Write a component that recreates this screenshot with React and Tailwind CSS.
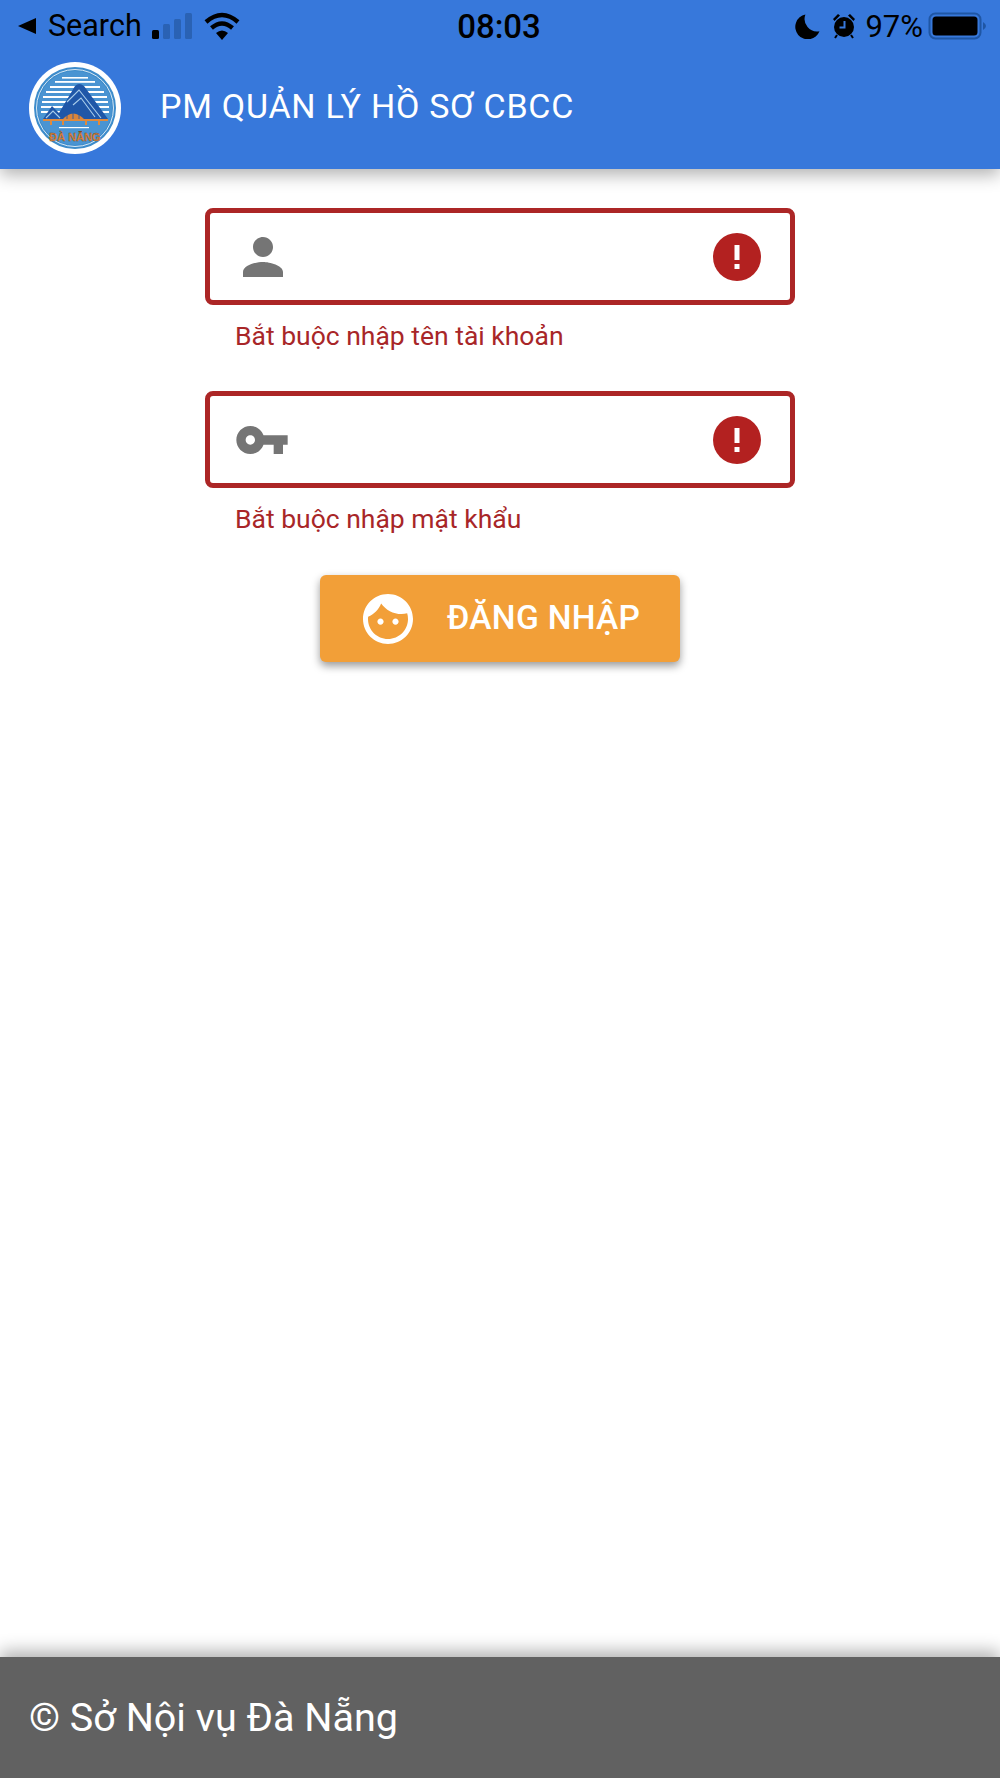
import React from 'react';

function Logo() {
  return (
    <svg viewBox="0 0 92 92" className="w-[92px] h-[92px] shrink-0">
      <circle cx="46" cy="46" r="46" fill="#ffffff" />
      <circle cx="46" cy="46" r="41" fill="#3d8ccb" />
      <circle cx="46" cy="46" r="38.5" fill="none" stroke="#ffffff" strokeWidth="0.8" />
      <circle cx="46" cy="46" r="37" fill="#4a94d2" />
      <g fill="#ffffff">
        <rect x="33" y="15" width="26" height="1.6" />
        <rect x="26" y="19" width="40" height="1.8" />
        <rect x="21" y="24" width="50" height="2" />
        <rect x="17" y="29" width="58" height="2" />
        <rect x="14" y="34" width="64" height="2" />
        <rect x="13" y="39" width="66" height="2" />
        <rect x="12" y="44" width="68" height="2" />
        <rect x="12" y="49" width="68" height="2" />
      </g>
      <path d="M14 57 L23 44 L30 51 L46 24 Q50 20 55 24 L79 57 Z" fill="#1f57a8" />
      <path d="M38 40 L50 28 L72 56 M44 43 L52 36 L66 55" fill="none" stroke="#a8cdeb" strokeWidth="1.1" />
      <path d="M17 56 L24 49 L31 56" fill="none" stroke="#a8cdeb" strokeWidth="1.1" />
      <path d="M33 58 Q44 45 56 58 Z" fill="#d9843a" />
      <path d="M44 48 V58 M38 52 V58 M50 52 V58" stroke="#1f57a8" strokeWidth="0.8" />
      <path d="M14 58 H79" stroke="#e08a3c" strokeWidth="1.8" />
      <g fill="#e08a3c">
        <rect x="21" y="58" width="2" height="5" />
        <rect x="33" y="58" width="2" height="5" />
        <rect x="56" y="58" width="2" height="5" />
        <rect x="69" y="58" width="2" height="5" />
      </g>
      <rect x="30" y="65" width="30" height="1.2" fill="#ffffff" />
      <text x="46" y="79" textAnchor="middle" fontFamily="'Liberation Sans', sans-serif" fontWeight="700" fontSize="11" fill="#e5873a" stroke="#7a4a22" strokeWidth="0.3">ĐÀ NẴNG</text>
    </svg>
  );
}

function StatusBar() {
  return (
    <div className="h-[50px] flex items-center justify-between pl-[18px] pr-[12px] pt-[2px] text-black">
      <div className="flex items-center w-[320px]">
        <svg viewBox="0 0 18 18" className="w-[18px] h-[18px]"><path d="M0 9 L18 1 V17 Z" fill="#000" /></svg>
        <span className="ml-[12px] text-[30.5px] leading-none">Search</span>
        <svg viewBox="0 0 42 26" className="ml-[10px] w-[42px] h-[26px]">
          <rect x="0" y="17" width="7" height="9" rx="1.5" fill="#000" />
          <rect x="11" y="11" width="7" height="15" rx="1.5" fill="#2a62b4" />
          <rect x="22" y="6" width="7" height="20" rx="1.5" fill="#2a62b4" />
          <rect x="33" y="0" width="7" height="26" rx="1.5" fill="#2a62b4" />
        </svg>
        <svg viewBox="0 0 38 28" className="ml-[9px] w-[38px] h-[28px]">
          <path d="M19 28 L13 21 Q19 16 25 21 Z" fill="#000" />
          <path d="M8.5 16 Q19 7 29.5 16" fill="none" stroke="#000" strokeWidth="4.4" />
          <path d="M3 10 Q19 -4 35 10" fill="none" stroke="#000" strokeWidth="4.4" />
        </svg>
      </div>
      <span className="text-[33px] leading-none font-medium ml-[-8px]">08:03</span>
      <div className="flex items-center justify-end w-[320px]">
        <svg viewBox="0 0 24 24" className="w-[25px] h-[26px]"><path d="M10 1 A12 12 0 1 0 23.5 17 A12 12 0 0 1 10 1 Z" fill="#000" /></svg>
        <svg viewBox="0 0 24 26" className="ml-[12px] w-[24px] h-[26px]">
          <circle cx="12" cy="14" r="10" fill="#000" />
          <path d="M1 6 L6 1 L8 2.5 L2.5 8 Z M23 6 L18 1 L16 2.5 L21.5 8 Z" fill="#000" />
          <path d="M5 22 L3 25 M19 22 L21 25" stroke="#000" strokeWidth="2" />
          <path d="M12.5 8 V14.5 H7.5" fill="none" stroke="#3778db" strokeWidth="2" />
        </svg>
        <span className="ml-[9px] text-[31px] leading-none">97%</span>
        <svg viewBox="0 0 60 28" className="ml-[5px] w-[60px] h-[28px]">
          <rect x="1.5" y="1.5" width="51" height="25" rx="6" fill="none" stroke="#1f56a4" strokeWidth="2" />
          <rect x="4.5" y="4.5" width="45" height="19" rx="3.5" fill="#000" />
          <path d="M55 10 Q58 12 58 14 Q58 16 55 18 Z" fill="#1f56a4" />
        </svg>
      </div>
    </div>
  );
}

function ErrorIcon() {
  return (
    <svg viewBox="0 0 48 48" className="w-[48px] h-[48px] shrink-0">
      <circle cx="24" cy="24" r="24" fill="#b32120" />
      <rect x="21.5" y="12" width="5" height="15" fill="#fff" />
      <rect x="21.5" y="31" width="5" height="5" fill="#fff" />
    </svg>
  );
}

function Field({ icon, message }) {
  return (
    <div>
      <div className="h-[97px] border-[5px] border-[#ac2626] rounded-[8px] bg-white flex items-center justify-between pl-[27px] pr-[29px]">
        <div className="w-[60px] flex items-center">{icon}</div>
        <ErrorIcon />
      </div>
      <p className="mt-[15px] ml-[30px] text-[26.5px] leading-[32px] text-[#a82628]">{message}</p>
    </div>
  );
}

export default function App() {
  return (
    <div className="w-[1000px] h-[1778px] flex flex-col bg-white font-['Roboto',sans-serif]">
      <header className="h-[169px] bg-[#3778db] shadow-[0_6px_16px_rgba(0,0,0,0.3)]">
        <StatusBar />
        <div className="flex items-center pl-[29px] mt-[12px]">
          <Logo />
          <h1 className="ml-[39px] pb-[4px] text-[34px] font-normal tracking-[0.75px] text-white">PM QUẢN LÝ HỒ SƠ CBCC</h1>
        </div>
      </header>

      <main className="flex-1 flex flex-col">
        <div className="w-[590px] ml-[205px] mt-[39px] flex flex-col gap-[39px]">
          <Field
            message="Bắt buộc nhập tên tài khoản"
            icon={
              <svg viewBox="0 0 24 24" className="w-[60px] h-[60px] ml-[-4px] my-[-10px]">
                <path d="M12 12c2.21 0 4-1.79 4-4s-1.79-4-4-4-4 1.79-4 4 1.79 4 4 4zm0 2c-2.67 0-8 1.34-8 4v2h16v-2c0-2.66-5.33-4-8-4z" fill="#757575" />
              </svg>
            }
          />
          <Field
            message="Bắt buộc nhập mật khẩu"
            icon={
              <svg viewBox="0 0 24 24" className="w-[56px] h-[56px] ml-[-3px] my-[-6px]">
                <path d="M12.65 10C11.83 7.67 9.61 6 7 6c-3.31 0-6 2.69-6 6s2.69 6 6 6c2.61 0 4.83-1.67 5.65-4H17v4h4v-4h2v-4H12.65zM7 14c-1.1 0-2-.9-2-2s.9-2 2-2 2 .9 2 2-.9 2-2 2z" fill="#757575" />
              </svg>
            }
          />
        </div>

        <button className="mt-[40px] ml-[320px] w-[360px] h-[87px] bg-[#f29f38] rounded-[6px] shadow-[0_4px_8px_rgba(0,0,0,0.4)] flex items-center pl-[43px] text-white">
          <svg viewBox="2 2 20 20" className="w-[50px] h-[50px] shrink-0">
            <path d="M9 11.75c-.69 0-1.25.56-1.25 1.25s.56 1.25 1.25 1.25 1.25-.56 1.25-1.25-.56-1.25-1.25-1.25zm6 0c-.69 0-1.25.56-1.25 1.25s.56 1.25 1.25 1.25 1.25-.56 1.25-1.25-.56-1.25-1.25-1.25zM12 2C6.48 2 2 6.48 2 12s4.48 10 10 10 10-4.48 10-10S17.52 2 12 2zm0 18c-4.41 0-8-3.59-8-8 0-.29.02-.58.05-.86 2.36-1.05 4.23-2.98 5.21-5.37C11.07 8.33 14.05 10 17.42 10c.78 0 1.53-.09 2.25-.26.21.71.33 1.47.33 2.26 0 4.41-3.59 8-8 8z" fill="#fff" />
          </svg>
          <span className="ml-[34px] text-[33.5px] font-medium tracking-[0.3px]">ĐĂNG NHẬP</span>
        </button>
      </main>

      <footer className="h-[121px] bg-[#616161] shadow-[0_-6px_16px_rgba(0,0,0,0.3)] flex items-center pl-[29px]">
        <span className="text-[39.5px] text-white">© Sở Nội vụ Đà Nẵng</span>
      </footer>
    </div>
  );
}
